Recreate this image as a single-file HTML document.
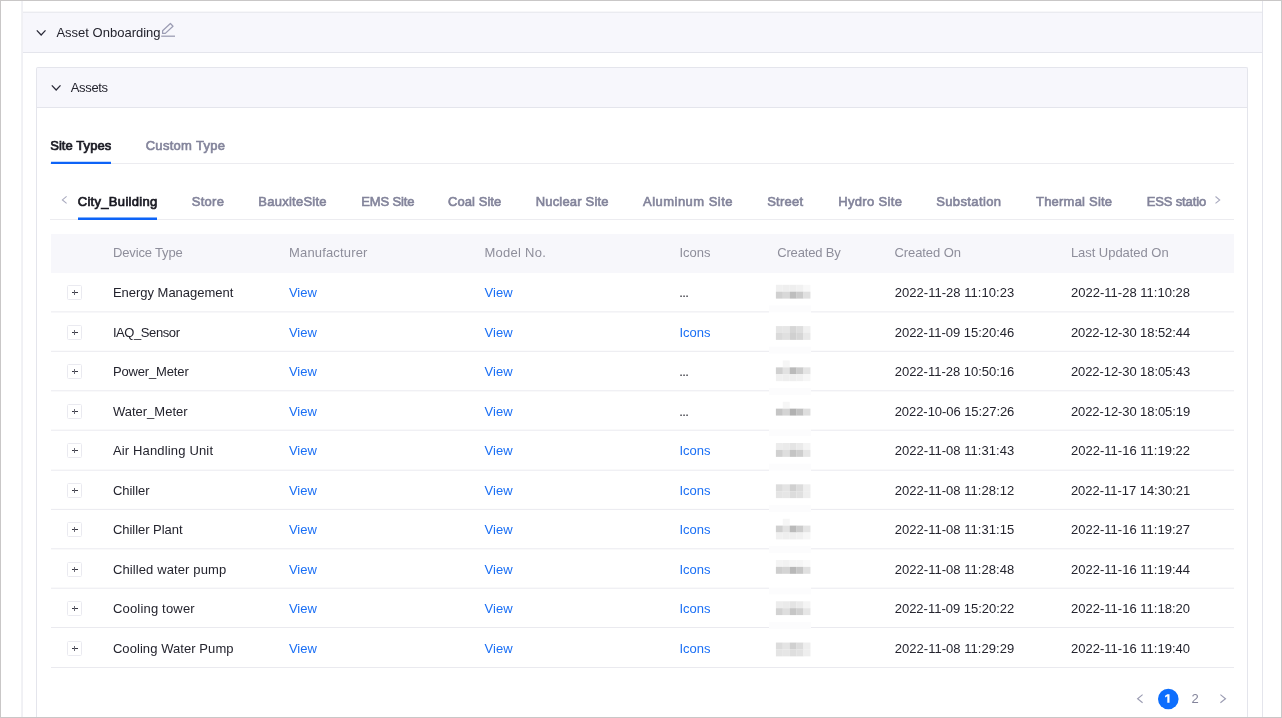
<!DOCTYPE html>
<html><head><meta charset="utf-8"><title>Asset Onboarding</title>
<style>
html,body{margin:0;padding:0;background:#fff}
body{width:1282px;height:718px;position:relative;overflow:hidden;font-family:"Liberation Sans",sans-serif}
.a{position:absolute}
.t{position:absolute;white-space:nowrap;line-height:1;font-family:"Liberation Sans",sans-serif}
.frame{left:0;top:0;width:1280px;height:716px;border:1px solid #c9c7c7}
.hl{position:absolute;height:1px;background:#ececf0}
.vl{position:absolute;width:1px;background:#e6e6ed}
.exp{position:absolute;left:67px;width:15px;height:15px;border:1px solid #eaeaf0;border-radius:1.5px;box-sizing:border-box;background:#fff}
.exp:before{content:"";position:absolute;left:4px;top:6px;width:6px;height:1px;background:#3a3a45}
.exp:after{content:"";position:absolute;left:6px;top:4px;width:1px;height:5px;background:#686873}
.root{position:absolute;left:0;top:0;width:1282px;height:718px;will-change:transform}
</style></head><body><div class="root">
<!-- outer panel -->
<div class="a" style="left:22px;top:13px;width:1241px;height:40px;background:#f7f7fc"></div>
<div class="hl" style="left:22px;top:11px;width:1241px;background:#f7f7f9"></div>
<div class="hl" style="left:22px;top:12px;width:1241px;background:#eaebf0"></div>
<div class="hl" style="left:22px;top:52px;width:1241px;background:#e4e5ec"></div>
<div class="vl" style="left:21px;top:1px;height:716px;background:#f1f2f5"></div>
<div class="vl" style="left:22px;top:1px;height:716px;background:#f0f0f4"></div>
<div class="vl" style="left:1262px;top:1px;height:716px;background:#e4e5ec"></div>
<!-- inner panel -->
<div class="a" style="left:36px;top:67px;width:1212px;height:41px;background:#f7f7fc;border:1px solid #e4e5ec;border-bottom:0;border-radius:2px 2px 0 0;box-sizing:border-box"></div>
<div class="hl" style="left:36px;top:107px;width:1212px;background:#e4e5ec"></div>
<div class="vl" style="left:36px;top:70px;height:647px;background:#e4e5ec"></div>
<div class="vl" style="left:1247px;top:70px;height:647px;background:#e4e5ec"></div>
<!-- chevrons + pencil -->
<svg class="a" style="left:30px;top:24px" width="22" height="18" viewBox="0 0 22 18"><path d="M6.8 6.3 L11.15 11.0 L15.5 6.3" fill="none" stroke="#2a2a38" stroke-width="1.25"/></svg>
<svg class="a" style="left:44.5px;top:79px" width="22" height="18" viewBox="0 0 22 18"><path d="M6.8 6.3 L11.15 11.0 L15.5 6.3" fill="none" stroke="#2a2a38" stroke-width="1.25"/></svg>
<svg class="a" style="left:160px;top:20px" width="18" height="18" viewBox="0 0 18 18"><path d="M10.4 3.5 L13 6.2 L5.3 13.4 L2.6 13.4 L2.6 10.8 Z" fill="none" stroke="#9c9db4" stroke-width="1.25" stroke-linejoin="round"/><path d="M1.2 16.2 H15" stroke="#9c9db4" stroke-width="1.3"/></svg>
<!-- tabs level 1 -->
<div class="hl" style="left:50px;top:163px;width:1184px"></div>
<div class="a" style="left:50.5px;top:161px;width:60.5px;height:1px;background:#c4dafd"></div>
<div class="a" style="left:50.5px;top:162px;width:60.5px;height:2px;background:#0d63f7"></div>
<!-- tabs level 2 -->
<div class="hl" style="left:50px;top:219px;width:1184px"></div>
<div class="a" style="left:78px;top:217px;width:79px;height:1px;background:#7fb0fb"></div>
<div class="a" style="left:78px;top:218px;width:79px;height:2px;background:#0d63f7"></div>
<svg class="a" style="left:58px;top:192px" width="14" height="16" viewBox="58 192 14 16"><path d="M66.6 196.4 L62.4 199.9 L66.6 203.4" fill="none" stroke="#a9aabf" stroke-width="1.1"/></svg>
<svg class="a" style="left:1211px;top:192px" width="14" height="16" viewBox="1211 192 14 16"><path d="M1215.5 196.5 L1219.7 199.95 L1215.5 203.4" fill="none" stroke="#a9aabf" stroke-width="1.1"/></svg>
<!-- table header -->
<div class="a" style="left:51px;top:234px;width:1183px;height:38.5px;background:#f7f7fb"></div>
<div class="hl" style="left:51px;top:311px;width:1183px;background:#f2f2f5"></div>
<div class="hl" style="left:51px;top:312px;width:1183px;background:#f7f7f9"></div>
<div class="exp" style="top:285px"></div>
<div class="hl" style="left:51px;top:350px;width:1183px;background:#fbfbfc"></div>
<div class="hl" style="left:51px;top:351px;width:1183px;background:#eeeef2"></div>
<div class="exp" style="top:325px"></div>
<div class="hl" style="left:51px;top:390px;width:1183px;background:#f0f0f4"></div>
<div class="hl" style="left:51px;top:391px;width:1183px;background:#f9f9fa"></div>
<div class="exp" style="top:364px"></div>
<div class="hl" style="left:51px;top:429px;width:1183px;background:#f9f9fa"></div>
<div class="hl" style="left:51px;top:430px;width:1183px;background:#f0f0f4"></div>
<div class="exp" style="top:404px"></div>
<div class="hl" style="left:51px;top:469px;width:1183px;background:#f9f9fa"></div>
<div class="hl" style="left:51px;top:470px;width:1183px;background:#f0f0f4"></div>
<div class="exp" style="top:443px"></div>
<div class="hl" style="left:51px;top:508px;width:1183px;background:#fdfdfd"></div>
<div class="hl" style="left:51px;top:509px;width:1183px;background:#ececf1"></div>
<div class="exp" style="top:483px"></div>
<div class="hl" style="left:51px;top:548px;width:1183px;background:#f0f0f4"></div>
<div class="hl" style="left:51px;top:549px;width:1183px;background:#f9f9fa"></div>
<div class="exp" style="top:522px"></div>
<div class="hl" style="left:51px;top:587px;width:1183px;background:#f9f9fa"></div>
<div class="hl" style="left:51px;top:588px;width:1183px;background:#f0f0f4"></div>
<div class="exp" style="top:562px"></div>
<div class="hl" style="left:51px;top:627px;width:1183px;background:#eaeaef"></div>
<div class="exp" style="top:601px"></div>
<div class="hl" style="left:51px;top:667px;width:1183px;background:#eaeaef"></div>
<div class="exp" style="top:641px"></div>
<span class=t style='left:56.4px;top:26.00px;font-size:13px;color:#24242e;letter-spacing:0.008px'>Asset Onboarding</span>
<span class=t style='left:70.8px;top:81.00px;font-size:13px;color:#24242e;letter-spacing:-0.353px'>Assets</span>
<span class=t style='left:50.2px;top:139.30px;font-size:13px;color:#191922;letter-spacing:0.063px;-webkit-text-stroke:0.7px'>Site Types</span>
<span class=t style='left:145.7px;top:139.30px;font-size:13px;color:#83849b;letter-spacing:0.295px;-webkit-text-stroke:0.62px'>Custom Type</span>
<span class=t style='left:77.7px;top:195.00px;font-size:13px;color:#191922;letter-spacing:0.31px;-webkit-text-stroke:0.7px'>City_Building</span>
<span class=t style='left:191.7px;top:195.00px;font-size:13px;color:#83849b;letter-spacing:0.304px;-webkit-text-stroke:0.62px'>Store</span>
<span class=t style='left:258.3px;top:195.00px;font-size:13px;color:#83849b;letter-spacing:0.249px;-webkit-text-stroke:0.62px'>BauxiteSite</span>
<span class=t style='left:361.2px;top:195.00px;font-size:13px;color:#83849b;letter-spacing:-0.136px;-webkit-text-stroke:0.62px'>EMS Site</span>
<span class=t style='left:448.1px;top:195.00px;font-size:13px;color:#83849b;letter-spacing:0.05px;-webkit-text-stroke:0.62px'>Coal Site</span>
<span class=t style='left:535.7px;top:195.00px;font-size:13px;color:#83849b;letter-spacing:0.182px;-webkit-text-stroke:0.62px'>Nuclear Site</span>
<span class=t style='left:643.0px;top:195.00px;font-size:13px;color:#83849b;letter-spacing:0.476px;-webkit-text-stroke:0.62px'>Aluminum Site</span>
<span class=t style='left:767.2px;top:195.00px;font-size:13px;color:#83849b;letter-spacing:0.235px;-webkit-text-stroke:0.62px'>Street</span>
<span class=t style='left:838.2px;top:195.00px;font-size:13px;color:#83849b;letter-spacing:0.34px;-webkit-text-stroke:0.62px'>Hydro Site</span>
<span class=t style='left:936.2px;top:195.00px;font-size:13px;color:#83849b;letter-spacing:0.386px;-webkit-text-stroke:0.62px'>Substation</span>
<span class=t style='left:1036.0px;top:195.00px;font-size:13px;color:#83849b;letter-spacing:0.216px;-webkit-text-stroke:0.62px'>Thermal Site</span>
<span class=t style='left:1146.7px;top:195.00px;font-size:13px;color:#83849b;letter-spacing:-0.14px;-webkit-text-stroke:0.62px'>ESS statio</span>
<span class=t style='left:113.0px;top:246.00px;font-size:13px;color:#8e8e9b;letter-spacing:-0.154px'>Device Type</span>
<span class=t style='left:289.0px;top:246.00px;font-size:13px;color:#8e8e9b;letter-spacing:0.167px'>Manufacturer</span>
<span class=t style='left:484.4px;top:246.00px;font-size:13px;color:#8e8e9b;letter-spacing:0.272px'>Model No.</span>
<span class=t style='left:679.4px;top:246.00px;font-size:13px;color:#8e8e9b;letter-spacing:0.024px'>Icons</span>
<span class=t style='left:777.2px;top:246.00px;font-size:13px;color:#8e8e9b;letter-spacing:-0.165px'>Created By</span>
<span class=t style='left:894.4px;top:246.00px;font-size:13px;color:#8e8e9b;letter-spacing:-0.07px'>Created On</span>
<span class=t style='left:1070.9px;top:246.00px;font-size:13px;color:#8e8e9b;letter-spacing:-0.04px'>Last Updated On</span>
<span class=t style='left:112.9px;top:286.00px;font-size:13px;color:#24242e;letter-spacing:-0.017px'>Energy Management</span>
<span class=t style='left:288.9px;top:286.00px;font-size:13px;color:#1a6ff5;letter-spacing:0.012px'>View</span>
<span class=t style='left:484.5px;top:286.00px;font-size:13px;color:#1a6ff5;letter-spacing:0.062px'>View</span>
<span class=t style='left:679.2px;top:286.00px;font-size:13px;color:#24242e;letter-spacing:-0.548px'>...</span>
<span class=t style='left:894.7px;top:286.00px;font-size:13px;color:#24242e;letter-spacing:0.042px'>2022-11-28 11:10:23</span>
<span class=t style='left:1070.9px;top:286.00px;font-size:13px;color:#24242e;letter-spacing:0.021px'>2022-11-28 11:10:28</span>
<span class=t style='left:112.9px;top:325.50px;font-size:13px;color:#24242e;letter-spacing:-0.413px'>IAQ_Sensor</span>
<span class=t style='left:288.9px;top:325.50px;font-size:13px;color:#1a6ff5;letter-spacing:0.012px'>View</span>
<span class=t style='left:484.5px;top:325.50px;font-size:13px;color:#1a6ff5;letter-spacing:0.062px'>View</span>
<span class=t style='left:679.4px;top:325.50px;font-size:13px;color:#1a6ff5;letter-spacing:0.024px'>Icons</span>
<span class=t style='left:894.7px;top:325.50px;font-size:13px;color:#24242e;letter-spacing:-0.008px'>2022-11-09 15:20:46</span>
<span class=t style='left:1070.9px;top:325.50px;font-size:13px;color:#24242e;letter-spacing:-0.08px'>2022-12-30 18:52:44</span>
<span class=t style='left:112.9px;top:365.00px;font-size:13px;color:#24242e;letter-spacing:-0.147px'>Power_Meter</span>
<span class=t style='left:288.9px;top:365.00px;font-size:13px;color:#1a6ff5;letter-spacing:0.012px'>View</span>
<span class=t style='left:484.5px;top:365.00px;font-size:13px;color:#1a6ff5;letter-spacing:0.062px'>View</span>
<span class=t style='left:679.2px;top:365.00px;font-size:13px;color:#24242e;letter-spacing:-0.548px'>...</span>
<span class=t style='left:894.7px;top:365.00px;font-size:13px;color:#24242e;letter-spacing:-0.008px'>2022-11-28 10:50:16</span>
<span class=t style='left:1070.9px;top:365.00px;font-size:13px;color:#24242e;letter-spacing:-0.08px'>2022-12-30 18:05:43</span>
<span class=t style='left:112.9px;top:404.50px;font-size:13px;color:#24242e;letter-spacing:0.004px'>Water_Meter</span>
<span class=t style='left:288.9px;top:404.50px;font-size:13px;color:#1a6ff5;letter-spacing:0.012px'>View</span>
<span class=t style='left:484.5px;top:404.50px;font-size:13px;color:#1a6ff5;letter-spacing:0.062px'>View</span>
<span class=t style='left:679.2px;top:404.50px;font-size:13px;color:#24242e;letter-spacing:-0.548px'>...</span>
<span class=t style='left:894.7px;top:404.50px;font-size:13px;color:#24242e;letter-spacing:-0.059px'>2022-10-06 15:27:26</span>
<span class=t style='left:1070.9px;top:404.50px;font-size:13px;color:#24242e;letter-spacing:-0.08px'>2022-12-30 18:05:19</span>
<span class=t style='left:112.9px;top:444.00px;font-size:13px;color:#24242e;letter-spacing:0.162px'>Air Handling Unit</span>
<span class=t style='left:288.9px;top:444.00px;font-size:13px;color:#1a6ff5;letter-spacing:0.012px'>View</span>
<span class=t style='left:484.5px;top:444.00px;font-size:13px;color:#1a6ff5;letter-spacing:0.062px'>View</span>
<span class=t style='left:679.4px;top:444.00px;font-size:13px;color:#1a6ff5;letter-spacing:0.024px'>Icons</span>
<span class=t style='left:894.7px;top:444.00px;font-size:13px;color:#24242e;letter-spacing:0.042px'>2022-11-08 11:31:43</span>
<span class=t style='left:1070.9px;top:444.00px;font-size:13px;color:#24242e;letter-spacing:0.021px'>2022-11-16 11:19:22</span>
<span class=t style='left:112.9px;top:483.50px;font-size:13px;color:#24242e;letter-spacing:-0.021px'>Chiller</span>
<span class=t style='left:288.9px;top:483.50px;font-size:13px;color:#1a6ff5;letter-spacing:0.012px'>View</span>
<span class=t style='left:484.5px;top:483.50px;font-size:13px;color:#1a6ff5;letter-spacing:0.062px'>View</span>
<span class=t style='left:679.4px;top:483.50px;font-size:13px;color:#1a6ff5;letter-spacing:0.024px'>Icons</span>
<span class=t style='left:894.7px;top:483.50px;font-size:13px;color:#24242e;letter-spacing:0.042px'>2022-11-08 11:28:12</span>
<span class=t style='left:1070.9px;top:483.50px;font-size:13px;color:#24242e;letter-spacing:-0.029px'>2022-11-17 14:30:21</span>
<span class=t style='left:112.9px;top:523.00px;font-size:13px;color:#24242e;letter-spacing:-0.03px'>Chiller Plant</span>
<span class=t style='left:288.9px;top:523.00px;font-size:13px;color:#1a6ff5;letter-spacing:0.012px'>View</span>
<span class=t style='left:484.5px;top:523.00px;font-size:13px;color:#1a6ff5;letter-spacing:0.062px'>View</span>
<span class=t style='left:679.4px;top:523.00px;font-size:13px;color:#1a6ff5;letter-spacing:0.024px'>Icons</span>
<span class=t style='left:894.7px;top:523.00px;font-size:13px;color:#24242e;letter-spacing:0.042px'>2022-11-08 11:31:15</span>
<span class=t style='left:1070.9px;top:523.00px;font-size:13px;color:#24242e;letter-spacing:0.021px'>2022-11-16 11:19:27</span>
<span class=t style='left:112.9px;top:562.50px;font-size:13px;color:#24242e;letter-spacing:0.118px'>Chilled water pump</span>
<span class=t style='left:288.9px;top:562.50px;font-size:13px;color:#1a6ff5;letter-spacing:0.012px'>View</span>
<span class=t style='left:484.5px;top:562.50px;font-size:13px;color:#1a6ff5;letter-spacing:0.062px'>View</span>
<span class=t style='left:679.4px;top:562.50px;font-size:13px;color:#1a6ff5;letter-spacing:0.024px'>Icons</span>
<span class=t style='left:894.7px;top:562.50px;font-size:13px;color:#24242e;letter-spacing:0.042px'>2022-11-08 11:28:48</span>
<span class=t style='left:1070.9px;top:562.50px;font-size:13px;color:#24242e;letter-spacing:0.021px'>2022-11-16 11:19:44</span>
<span class=t style='left:112.9px;top:602.00px;font-size:13px;color:#24242e;letter-spacing:0.192px'>Cooling tower</span>
<span class=t style='left:288.9px;top:602.00px;font-size:13px;color:#1a6ff5;letter-spacing:0.012px'>View</span>
<span class=t style='left:484.5px;top:602.00px;font-size:13px;color:#1a6ff5;letter-spacing:0.062px'>View</span>
<span class=t style='left:679.4px;top:602.00px;font-size:13px;color:#1a6ff5;letter-spacing:0.024px'>Icons</span>
<span class=t style='left:894.7px;top:602.00px;font-size:13px;color:#24242e;letter-spacing:-0.008px'>2022-11-09 15:20:22</span>
<span class=t style='left:1070.9px;top:602.00px;font-size:13px;color:#24242e;letter-spacing:0.021px'>2022-11-16 11:18:20</span>
<span class=t style='left:112.9px;top:641.50px;font-size:13px;color:#24242e;letter-spacing:0.068px'>Cooling Water Pump</span>
<span class=t style='left:288.9px;top:641.50px;font-size:13px;color:#1a6ff5;letter-spacing:0.012px'>View</span>
<span class=t style='left:484.5px;top:641.50px;font-size:13px;color:#1a6ff5;letter-spacing:0.062px'>View</span>
<span class=t style='left:679.4px;top:641.50px;font-size:13px;color:#1a6ff5;letter-spacing:0.024px'>Icons</span>
<span class=t style='left:894.7px;top:641.50px;font-size:13px;color:#24242e;letter-spacing:0.042px'>2022-11-08 11:29:29</span>
<span class=t style='left:1070.9px;top:641.50px;font-size:13px;color:#24242e;letter-spacing:0.021px'>2022-11-16 11:19:40</span>
<span class=t style='left:1191.4px;top:691.90px;font-size:13px;color:#83849b;letter-spacing:0.266px'>2</span>
<svg class="a" style="left:760px;top:272px" width="60" height="392" viewBox="760 272 60 392">
<rect x="769.0" y="304.84" width="42.00" height="8.28" fill="#fff"/>
<rect x="769.0" y="305.44" width="42.00" height="6.88" fill="#fcfcfd"/>
<rect x="769.0" y="346.12" width="42.00" height="8.28" fill="#fff"/>
<rect x="769.0" y="346.72" width="42.00" height="6.88" fill="#fcfcfd"/>
<rect x="769.0" y="387.40" width="42.00" height="8.28" fill="#fff"/>
<rect x="769.0" y="388.00" width="42.00" height="6.88" fill="#fcfcfd"/>
<rect x="769.0" y="428.68" width="42.00" height="8.28" fill="#fff"/>
<rect x="769.0" y="429.28" width="42.00" height="6.88" fill="#fcfcfd"/>
<rect x="769.0" y="463.08" width="42.00" height="8.28" fill="#fff"/>
<rect x="769.0" y="463.68" width="42.00" height="6.88" fill="#fcfcfd"/>
<rect x="769.0" y="504.36" width="42.00" height="8.28" fill="#fff"/>
<rect x="769.0" y="504.96" width="42.00" height="6.88" fill="#fcfcfd"/>
<rect x="769.0" y="545.64" width="42.00" height="8.28" fill="#fff"/>
<rect x="769.0" y="546.24" width="42.00" height="6.88" fill="#fcfcfd"/>
<rect x="769.0" y="586.92" width="42.00" height="8.28" fill="#fff"/>
<rect x="769.0" y="587.52" width="42.00" height="6.88" fill="#fcfcfd"/>
<rect x="769.0" y="621.32" width="42.00" height="8.28" fill="#fff"/>
<rect x="769.0" y="621.92" width="42.00" height="6.88" fill="#fcfcfd"/>
<rect x="775.90" y="284.80" width="6.95" height="6.93" fill="#f0f0f0"/>
<rect x="782.80" y="284.80" width="6.95" height="6.93" fill="#eeeeee"/>
<rect x="789.70" y="284.80" width="6.95" height="6.93" fill="#eeeeee"/>
<rect x="796.60" y="284.80" width="6.95" height="6.93" fill="#f1f1f1"/>
<rect x="803.50" y="284.80" width="6.95" height="6.93" fill="#f8f8f8"/>
<rect x="775.90" y="291.68" width="6.95" height="6.93" fill="#d0d0d0"/>
<rect x="782.80" y="291.68" width="6.95" height="6.93" fill="#d8d8d8"/>
<rect x="789.70" y="291.68" width="6.95" height="6.93" fill="#bebebe"/>
<rect x="796.60" y="291.68" width="6.95" height="6.93" fill="#cbcbcb"/>
<rect x="803.50" y="291.68" width="6.95" height="6.93" fill="#e0e0e0"/>
<rect x="775.90" y="326.08" width="6.95" height="6.93" fill="#e5e5e5"/>
<rect x="782.80" y="326.08" width="6.95" height="6.93" fill="#e6e6e6"/>
<rect x="789.70" y="326.08" width="6.95" height="6.93" fill="#d6d6d6"/>
<rect x="796.60" y="326.08" width="6.95" height="6.93" fill="#dedede"/>
<rect x="803.50" y="326.08" width="6.95" height="6.93" fill="#f0f0f0"/>
<rect x="775.90" y="332.96" width="6.95" height="6.93" fill="#dadada"/>
<rect x="782.80" y="332.96" width="6.95" height="6.93" fill="#e0e0e0"/>
<rect x="789.70" y="332.96" width="6.95" height="6.93" fill="#d0d0d0"/>
<rect x="796.60" y="332.96" width="6.95" height="6.93" fill="#d6d6d6"/>
<rect x="803.50" y="332.96" width="6.95" height="6.93" fill="#e8e8e8"/>
<rect x="782.80" y="360.48" width="6.95" height="6.93" fill="#f6f6f6"/>
<rect x="775.90" y="367.36" width="6.95" height="6.93" fill="#d0d0d0"/>
<rect x="782.80" y="367.36" width="6.95" height="6.93" fill="#e2e2e2"/>
<rect x="789.70" y="367.36" width="6.95" height="6.93" fill="#bababa"/>
<rect x="796.60" y="367.36" width="6.95" height="6.93" fill="#cccccc"/>
<rect x="803.50" y="367.36" width="6.95" height="6.93" fill="#e4e4e4"/>
<rect x="775.90" y="374.24" width="6.95" height="6.93" fill="#f0f0f0"/>
<rect x="782.80" y="374.24" width="6.95" height="6.93" fill="#eeeeee"/>
<rect x="789.70" y="374.24" width="6.95" height="6.93" fill="#eeeeee"/>
<rect x="796.60" y="374.24" width="6.95" height="6.93" fill="#f0f0f0"/>
<rect x="803.50" y="374.24" width="6.95" height="6.93" fill="#f6f6f6"/>
<rect x="782.80" y="401.76" width="6.95" height="6.93" fill="#f6f6f6"/>
<rect x="775.90" y="408.64" width="6.95" height="6.93" fill="#c5c5c5"/>
<rect x="782.80" y="408.64" width="6.95" height="6.93" fill="#d4d4d4"/>
<rect x="789.70" y="408.64" width="6.95" height="6.93" fill="#b1b1b1"/>
<rect x="796.60" y="408.64" width="6.95" height="6.93" fill="#c1c1c1"/>
<rect x="803.50" y="408.64" width="6.95" height="6.93" fill="#dedede"/>
<rect x="775.90" y="443.04" width="6.95" height="6.93" fill="#ececec"/>
<rect x="782.80" y="443.04" width="6.95" height="6.93" fill="#eaeaea"/>
<rect x="789.70" y="443.04" width="6.95" height="6.93" fill="#e4e4e4"/>
<rect x="796.60" y="443.04" width="6.95" height="6.93" fill="#eaeaea"/>
<rect x="803.50" y="443.04" width="6.95" height="6.93" fill="#f4f4f4"/>
<rect x="775.90" y="449.92" width="6.95" height="6.93" fill="#d0d0d0"/>
<rect x="782.80" y="449.92" width="6.95" height="6.93" fill="#dedede"/>
<rect x="789.70" y="449.92" width="6.95" height="6.93" fill="#c4c4c4"/>
<rect x="796.60" y="449.92" width="6.95" height="6.93" fill="#cecece"/>
<rect x="803.50" y="449.92" width="6.95" height="6.93" fill="#e6e6e6"/>
<rect x="775.90" y="484.32" width="6.95" height="6.93" fill="#dcdcdc"/>
<rect x="782.80" y="484.32" width="6.95" height="6.93" fill="#e4e4e4"/>
<rect x="789.70" y="484.32" width="6.95" height="6.93" fill="#d0d0d0"/>
<rect x="796.60" y="484.32" width="6.95" height="6.93" fill="#dcdcdc"/>
<rect x="803.50" y="484.32" width="6.95" height="6.93" fill="#eeeeee"/>
<rect x="775.90" y="491.20" width="6.95" height="6.93" fill="#e4e4e4"/>
<rect x="782.80" y="491.20" width="6.95" height="6.93" fill="#e6e6e6"/>
<rect x="789.70" y="491.20" width="6.95" height="6.93" fill="#dcdcdc"/>
<rect x="796.60" y="491.20" width="6.95" height="6.93" fill="#e0e0e0"/>
<rect x="803.50" y="491.20" width="6.95" height="6.93" fill="#eeeeee"/>
<rect x="782.80" y="518.72" width="6.95" height="6.93" fill="#f6f6f6"/>
<rect x="775.90" y="525.60" width="6.95" height="6.93" fill="#d0d0d0"/>
<rect x="782.80" y="525.60" width="6.95" height="6.93" fill="#e2e2e2"/>
<rect x="789.70" y="525.60" width="6.95" height="6.93" fill="#bababa"/>
<rect x="796.60" y="525.60" width="6.95" height="6.93" fill="#cccccc"/>
<rect x="803.50" y="525.60" width="6.95" height="6.93" fill="#e4e4e4"/>
<rect x="775.90" y="532.48" width="6.95" height="6.93" fill="#f0f0f0"/>
<rect x="782.80" y="532.48" width="6.95" height="6.93" fill="#eeeeee"/>
<rect x="789.70" y="532.48" width="6.95" height="6.93" fill="#eeeeee"/>
<rect x="796.60" y="532.48" width="6.95" height="6.93" fill="#f0f0f0"/>
<rect x="803.50" y="532.48" width="6.95" height="6.93" fill="#f6f6f6"/>
<rect x="775.90" y="560.00" width="6.95" height="6.93" fill="#f4f4f4"/>
<rect x="782.80" y="560.00" width="6.95" height="6.93" fill="#f2f2f2"/>
<rect x="789.70" y="560.00" width="6.95" height="6.93" fill="#f6f6f6"/>
<rect x="796.60" y="560.00" width="6.95" height="6.93" fill="#f6f6f6"/>
<rect x="803.50" y="560.00" width="6.95" height="6.93" fill="#fafafa"/>
<rect x="775.90" y="566.88" width="6.95" height="6.93" fill="#cecece"/>
<rect x="782.80" y="566.88" width="6.95" height="6.93" fill="#d4d4d4"/>
<rect x="789.70" y="566.88" width="6.95" height="6.93" fill="#b8b8b8"/>
<rect x="796.60" y="566.88" width="6.95" height="6.93" fill="#c6c6c6"/>
<rect x="803.50" y="566.88" width="6.95" height="6.93" fill="#e0e0e0"/>
<rect x="775.90" y="601.28" width="6.95" height="6.93" fill="#ececec"/>
<rect x="782.80" y="601.28" width="6.95" height="6.93" fill="#eaeaea"/>
<rect x="789.70" y="601.28" width="6.95" height="6.93" fill="#e4e4e4"/>
<rect x="796.60" y="601.28" width="6.95" height="6.93" fill="#eaeaea"/>
<rect x="803.50" y="601.28" width="6.95" height="6.93" fill="#f4f4f4"/>
<rect x="775.90" y="608.16" width="6.95" height="6.93" fill="#d2d2d2"/>
<rect x="782.80" y="608.16" width="6.95" height="6.93" fill="#dedede"/>
<rect x="789.70" y="608.16" width="6.95" height="6.93" fill="#c6c6c6"/>
<rect x="796.60" y="608.16" width="6.95" height="6.93" fill="#d0d0d0"/>
<rect x="803.50" y="608.16" width="6.95" height="6.93" fill="#e6e6e6"/>
<rect x="775.90" y="642.56" width="6.95" height="6.93" fill="#dcdcdc"/>
<rect x="782.80" y="642.56" width="6.95" height="6.93" fill="#e4e4e4"/>
<rect x="789.70" y="642.56" width="6.95" height="6.93" fill="#d0d0d0"/>
<rect x="796.60" y="642.56" width="6.95" height="6.93" fill="#dcdcdc"/>
<rect x="803.50" y="642.56" width="6.95" height="6.93" fill="#eeeeee"/>
<rect x="775.90" y="649.44" width="6.95" height="6.93" fill="#e4e4e4"/>
<rect x="782.80" y="649.44" width="6.95" height="6.93" fill="#e6e6e6"/>
<rect x="789.70" y="649.44" width="6.95" height="6.93" fill="#dedede"/>
<rect x="796.60" y="649.44" width="6.95" height="6.93" fill="#e2e2e2"/>
<rect x="803.50" y="649.44" width="6.95" height="6.93" fill="#eeeeee"/>
</svg>
<!-- pagination -->
<svg class="a" style="left:1130px;top:688px" width="104" height="24" viewBox="1130 688 104 24"><path d="M1142.6 694.6 L1137.6 698.7 L1142.6 702.8" fill="none" stroke="#9c9db3" stroke-width="1.15"/><path d="M1220.4 694.6 L1225.5 698.7 L1220.4 702.8" fill="none" stroke="#9c9db3" stroke-width="1.15"/>
<circle cx="1168.3" cy="698.95" r="10.3" fill="#0d6efd"/>
<path d="M1167.3 694.15 H1169.5 V702.85 H1167.3 V696.3 L1165.1 697.5 V695.8 Z" fill="#fff"/></svg>
<div class="a frame"></div>
</div></body></html>
